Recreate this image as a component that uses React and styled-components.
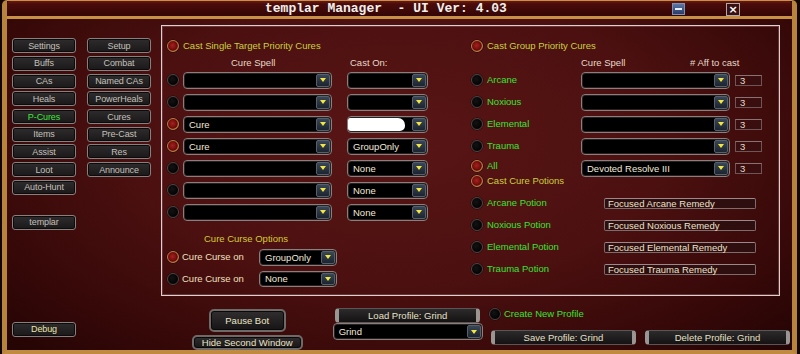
import React from 'react'
import styled, { createGlobalStyle, css } from 'styled-components'

const GlobalStyle = createGlobalStyle`
  html, body {
    margin: 0;
    padding: 0;
    background: #120605;
  }
  body {
    font-family: "Liberation Sans", Arial, sans-serif;
  }
  * {
    box-sizing: border-box;
  }
`

// window frame + title bar
const Window = styled.div`
  margin-left: 2px;
  width: 795px;
  height: 354px;
  display: flex;
  flex-direction: column;
  border: 5px solid #b8843c;
  border-top: 1px solid #c89048;
  border-bottom: 4px solid #c08a40;
  border-radius: 5px 5px 0 0;
  background: radial-gradient(ellipse 75% 90% at 50% 40%, #591515 0%, #4c1010 45%, #360808 75%, #1e0303 100%);
  overflow: hidden;
`

const TitleBar = styled.div`
  height: 18px;
  display: flex;
  align-items: center;
  padding-left: 258px;
  background: linear-gradient(#6a1a14 0, #4a0c0a 3px, #340505 100%);
  border-bottom: 3px solid #c89044;
  border-radius: 4px 4px 0 0;
`

const Title = styled.div`
  font-family: "Liberation Mono", "Courier New", monospace;
  font-weight: bold;
  font-size: 13px;
  color: #f4f0ec;
  white-space: pre;
  width: 242px;
`

const MinButton = styled.div`
  margin-left: 165px;
  width: 13px;
  height: 12px;
  background: linear-gradient(#5a78a8, #283c68);
  border: 1px solid #8090b0;
  display: flex;
  align-items: center;
  justify-content: center;
  &::after {
    content: '';
    width: 7px;
    height: 2px;
    background: #e8eef8;
  }
`

const CloseButton = styled.div`
  margin-left: 41px;
  margin-top: 2px;
  width: 14px;
  height: 13px;
  border: 1px solid #b0a8a8;
  background: #3a1010;
  color: #ffffff;
  font-family: "DejaVu Sans", sans-serif;
  font-size: 11px;
  font-weight: bold;
  line-height: 11px;
  text-align: center;
`

const Body = styled.div`
  flex: 1;
  display: flex;
`

// left navigation
const Sidebar = styled.div`
  width: 154px;
  display: flex;
  flex-direction: column;
  padding: 19.3px 0 13.3px 5px;
`

const NavGrid = styled.div`
  display: grid;
  grid-template-columns: 64px 64px;
  grid-auto-rows: 15px;
  column-gap: 11px;
  row-gap: 2.7px;
`

const NavButton = styled.div`
  width: 64px;
  height: 15px;
  display: flex;
  align-items: center;
  justify-content: center;
  border: 1px solid #86807e;
  border-radius: 3px;
  background: linear-gradient(#2e2c2c, #1a1818);
  box-shadow: inset 0 0 0 1px #0c0a0a;
  color: ${p => p.$color || '#c4c0bc'};
  font-size: 9px;
  letter-spacing: -0.1px;
  ${p => p.$gap && css`margin-top: ${p.$gap}px;`}
  ${p => p.$bottom && css`margin-top: auto;`}
`

// main panel
const Main = styled.div`
  flex: 1;
  display: flex;
  flex-direction: column;
  padding-top: 6px;
`

const Panel = styled.div`
  width: 619px;
  height: 271px;
  border: 1px solid #dcd0d0;
  box-shadow: inset 0 0 0 1px #6a3434;
  display: flex;
  align-items: flex-start;
  padding: 13px 0 0 5px;
  font-size: 9.5px;
`

const Column = styled.div`
  display: flex;
  flex-direction: column;
  width: ${p => p.$w}px;
  margin-left: ${p => p.$ml || 0}px;
`

const HeaderRow = styled.div`
  height: ${p => p.$h || 14}px;
  display: flex;
  align-items: center;
`

const Label = styled.span`
  color: ${p => p.$color};
  margin-left: ${p => p.$ml ?? 4}px;
  width: ${p => (p.$w ? `${p.$w}px` : 'auto')};
  white-space: nowrap;
  line-height: 12px;
`

const ColHeaders = styled.div`
  margin-top: 3px;
  height: 13px;
  display: flex;
  align-items: center;
  padding-left: ${p => p.$pl}px;
  color: #e6d8c8;
  white-space: nowrap;
`

const HeadCell = styled.span`
  width: ${p => (p.$w ? `${p.$w}px` : 'auto')};
`

const Row = styled.div`
  height: ${p => p.$h || 22}px;
  display: flex;
  align-items: center;
  ${p => p.$top && css`
    align-items: flex-start;
    padding-top: 2.5px;
  `}
  ${p => p.$mt && css`margin-top: ${p.$mt}px;`}
`

const Radio = styled.span`
  flex: none;
  width: 12px;
  height: 12px;
  border-radius: 50%;
  border: 1px solid ${p => (p.$on ? '#b88044' : '#4a4444')};
  background: ${p =>
    p.$on
      ? 'radial-gradient(circle at 45% 45%, #a02420 0%, #7e0e0e 45%, #620808 62%, #c08446 78%, #6a3a14 100%)'
      : 'radial-gradient(circle at 40% 40%, #141212 0%, #040404 70%, #1a1818 100%)'};
  box-shadow: 0 0 0 0.5px #1a0808;
  ${p => p.$nudge && css`margin-top: ${p.$nudge}px;`}
`

const ComboBox = styled.div`
  flex: none;
  display: flex;
  width: ${p => p.$w}px;
  height: ${p => p.$h || 17}px;
  margin-left: ${p => p.$ml || 0}px;
  background: #000;
  border: 1px solid #8c7e7c;
  border-radius: 4px;
  box-shadow: inset 0 0 0 1px #262222;
  overflow: hidden;
`

const ComboText = styled.div`
  flex: 1;
  display: flex;
  align-items: center;
  padding-left: 5px;
  color: #f0e8d8;
  white-space: nowrap;
`

const DropButton = styled.div`
  width: 14px;
  margin: 1px;
  border-radius: 2px;
  border: 1px solid #56606c;
  background: linear-gradient(#3a4656, #1c2430);
  display: flex;
  align-items: center;
  justify-content: center;
`

const Arrow = styled.span`
  width: 0;
  height: 0;
  border-left: 3.5px solid transparent;
  border-right: 3.5px solid transparent;
  border-top: 4px solid #f2e640;
`

const Redacted = styled.span`
  margin-left: -5px;
  width: 57px;
  height: 13px;
  background: #ffffff;
  border-radius: 2px 7px 5px 3px;
`

const NumBox = styled.div`
  width: 27px;
  height: 11px;
  margin-left: 5px;
  ${p => p.$mt && css`margin-top: ${p.$mt}px;`}
  background: #3a0e0e;
  border: 1px solid #6e5656;
  border-top-color: #8a7272;
  color: #e8dcc8;
  padding-left: 4px;
  line-height: 9px;
`

const Field = styled.div`
  width: 152px;
  height: 11px;
  background: #2e0e0e;
  border: 1px solid #7e6c6c;
  border-top-color: #9c8888;
  border-radius: 2px;
  color: #ece2cc;
  padding-left: 3px;
  line-height: 9px;
  white-space: nowrap;
`

// bottom bar
const BottomBar = styled.div`
  display: flex;
  align-items: flex-start;
  padding-top: 12px;
  font-size: 9.5px;
`

const Group = styled.div`
  display: flex;
  flex-direction: column;
  align-items: ${p => p.$align || 'center'};
  width: ${p => (p.$w ? `${p.$w}px` : 'auto')};
  margin-left: ${p => p.$ml}px;
`

const RoundButton = styled.div`
  width: ${p => p.$w}px;
  height: ${p => p.$h}px;
  margin-top: ${p => p.$mt || 0}px;
  display: flex;
  align-items: center;
  justify-content: center;
  border: 2px solid #6e6a68;
  border-radius: 5px;
  background: linear-gradient(#302e2e, #161414);
  box-shadow: inset 0 0 0 1px #0a0808;
  color: #ece4c8;
  white-space: nowrap;
`

const BracketButton = styled.div`
  flex: none;
  width: 145px;
  height: 15px;
  margin-left: ${p => p.$ml || 0}px;
  margin-top: ${p => p.$mt || 0}px;
  display: flex;
  align-items: center;
  justify-content: center;
  border: 1px solid #5a5656;
  border-left: 4px solid #9a9694;
  border-right: 4px solid #9a9694;
  border-radius: 4px;
  background: linear-gradient(#2c2a2a, #141212);
  color: #e8e0c8;
  white-space: nowrap;
`

function Combo({ w, h, ml, value, children }) {
  return (
    <ComboBox $w={w} $h={h} $ml={ml}>
      <ComboText>
        {value}
        {children}
      </ComboText>
      <DropButton>
        <Arrow />
      </DropButton>
    </ComboBox>
  )
}

const navLeft = ['Settings', 'Buffs', 'CAs', 'Heals', 'P-Cures', 'Items', 'Assist', 'Loot', 'Auto-Hunt']
const navRight = ['Setup', 'Combat', 'Named CAs', 'PowerHeals', 'Cures', 'Pre-Cast', 'Res', 'Announce']

const singleRows = [
  { on: false, spell: '', on2: '' },
  { on: false, spell: '', on2: '' },
  { on: true, spell: 'Cure', redacted: true },
  { on: true, spell: 'Cure', on2: 'GroupOnly' },
  { on: false, spell: '', on2: 'None' },
  { on: false, spell: '', on2: 'None' },
  { on: false, spell: '', on2: 'None' },
]

const groupRows = ['Arcane', 'Noxious', 'Elemental', 'Trauma']

const potions = [
  ['Arcane Potion', 'Focused Arcane Remedy'],
  ['Noxious Potion', 'Focused Noxious Remedy'],
  ['Elemental Potion', 'Focused Elemental Remedy'],
  ['Trauma Potion', 'Focused Trauma Remedy'],
]

const GREEN = '#36e234'
const YELLOW = '#cad03c'

export default function App() {
  const navCells = []
  navLeft.forEach((name, i) => {
    navCells.push(
      <NavButton key={'l' + name} $color={name === 'P-Cures' ? '#3ee83a' : undefined}>
        {name}
      </NavButton>
    )
    if (navRight[i]) navCells.push(<NavButton key={'r' + navRight[i]}>{navRight[i]}</NavButton>)
  })

  return (
    <>
      <GlobalStyle />
      <Window>
        <TitleBar>
          <Title>{'templar Manager  - UI Ver: 4.03'}</Title>
          <MinButton />
          <CloseButton>×</CloseButton>
        </TitleBar>

        <Body>
          <Sidebar>
            <NavGrid>{navCells}</NavGrid>
            <NavButton $gap={20}>templar</NavButton>
            <NavButton $bottom $color="#ece4a8">Debug</NavButton>
          </Sidebar>

          <Main>
            <Panel>
              {/* single target cures */}
              <Column $w={262}>
                <HeaderRow>
                  <Radio $on />
                  <Label $color={YELLOW}>Cast Single Target Priority Cures</Label>
                </HeaderRow>
                <ColHeaders $pl={64}>
                  <HeadCell $w={119}>Cure Spell</HeadCell>
                  <HeadCell>Cast On:</HeadCell>
                </ColHeaders>
                {singleRows.map((r, i) => (
                  <Row key={i}>
                    <Radio $on={r.on} />
                    <Combo w={149} ml={4} value={r.spell} />
                    <Combo w={81} ml={15} value={r.on2}>
                      {r.redacted && <Redacted />}
                    </Combo>
                  </Row>
                ))}
                <HeaderRow $h={13} style={{ marginTop: 9 }}>
                  <Label $color="#d4cc30" $ml={37}>Cure Curse Options</Label>
                </HeaderRow>
                <Row $h={21.5} style={{ marginTop: 1.5 }}>
                  <Radio $on />
                  <Label $color="#f0e0c0" $ml={3} $w={77}>Cure Curse on</Label>
                  <Combo w={78} h={16.5} value="GroupOnly" />
                </Row>
                <Row $h={21.5}>
                  <Radio />
                  <Label $color="#f0e0c0" $ml={3} $w={77}>Cure Curse on</Label>
                  <Combo w={78} h={16.5} value="None" />
                </Row>
              </Column>

              {/* group cures and potions */}
              <Column $w={292} $ml={42}>
                <HeaderRow>
                  <Radio $on />
                  <Label $color={YELLOW}>Cast Group Priority Cures</Label>
                </HeaderRow>
                <ColHeaders $pl={110}>
                  <HeadCell $w={109}>Cure Spell</HeadCell>
                  <HeadCell># Aff to cast</HeadCell>
                </ColHeaders>
                {groupRows.map(name => (
                  <Row key={name}>
                    <Radio />
                    <Label $color={GREEN} $w={94}>{name}</Label>
                    <Combo w={149} />
                    <NumBox>3</NumBox>
                  </Row>
                ))}
                <Row $h={18} $top>
                  <Radio $on $nudge={0.5} />
                  <Label $color={GREEN} $w={94}>All</Label>
                  <Combo w={149} value="Devoted Resolve III" />
                  <NumBox $mt={3}>3</NumBox>
                </Row>
                <HeaderRow $h={12}>
                  <Radio $on />
                  <Label $color={YELLOW}>Cast Cure Potions</Label>
                </HeaderRow>
                {potions.map(([name, item], i) => (
                  <Row key={name} $mt={i === 0 ? 5 : 0}>
                    <Radio />
                    <Label $color={GREEN} $w={117}>{name}</Label>
                    <Field>{item}</Field>
                  </Row>
                ))}
              </Column>
            </Panel>

            <BottomBar>
              <Group $w={111} $ml={30.7}>
                <RoundButton $w={77} $h={23} $mt={1.3}>Pause Bot</RoundButton>
                <RoundButton $w={111} $h={14.5} $mt={3}>Hide Second Window</RoundButton>
              </Group>
              <Group $w={150} $ml={30}>
                <BracketButton>Load Profile: Grind</BracketButton>
                <Combo w={150} ml={0} value="Grind" />
              </Group>
              <Group $ml={6.3} $align="flex-start">
                <HeaderRow $h={11}>
                  <Radio />
                  <Label $color={GREEN} $ml={3}>Create New Profile</Label>
                </HeaderRow>
                <BracketButton $ml={2} $mt={11}>Save Profile: Grind</BracketButton>
              </Group>
              <BracketButton $ml={9} $mt={22}>Delete Profile: Grind</BracketButton>
            </BottomBar>
          </Main>
        </Body>
      </Window>
    </>
  )
}
